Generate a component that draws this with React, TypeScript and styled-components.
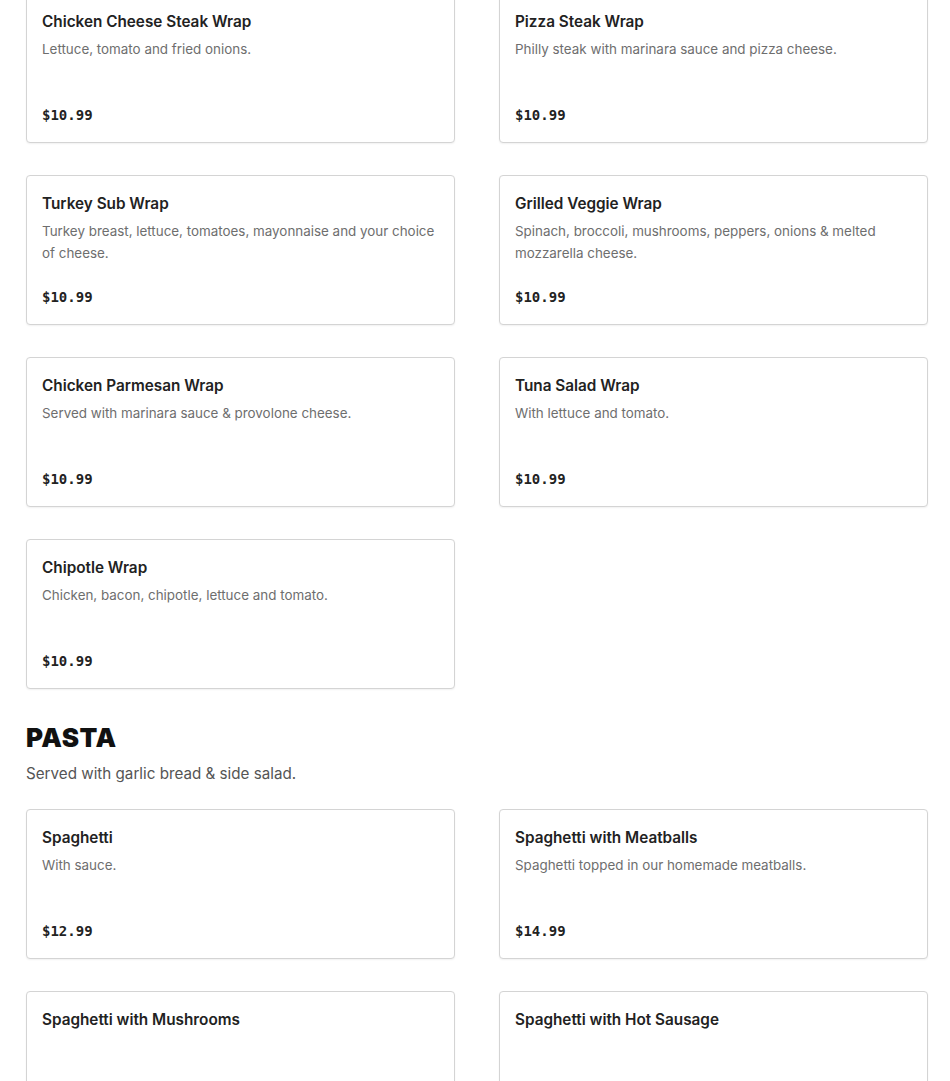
import styled, { createGlobalStyle } from 'styled-components';

interface Item {
  name: string;
  description?: string;
  price?: string;
}

const wraps: Item[] = [
  { name: 'Chicken Cheese Steak Wrap', description: 'Lettuce, tomato and fried onions.', price: '$10.99' },
  { name: 'Pizza Steak Wrap', description: 'Philly steak with marinara sauce and pizza cheese.', price: '$10.99' },
  {
    name: 'Turkey Sub Wrap',
    description: 'Turkey breast, lettuce, tomatoes, mayonnaise and your choice of cheese.',
    price: '$10.99',
  },
  {
    name: 'Grilled Veggie Wrap',
    description: 'Spinach, broccoli, mushrooms, peppers, onions & melted mozzarella cheese.',
    price: '$10.99',
  },
  { name: 'Chicken Parmesan Wrap', description: 'Served with marinara sauce & provolone cheese.', price: '$10.99' },
  { name: 'Tuna Salad Wrap', description: 'With lettuce and tomato.', price: '$10.99' },
  { name: 'Chipotle Wrap', description: 'Chicken, bacon, chipotle, lettuce and tomato.', price: '$10.99' },
];

const pasta: Item[] = [
  { name: 'Spaghetti', description: 'With sauce.', price: '$12.99' },
  { name: 'Spaghetti with Meatballs', description: 'Spaghetti topped in our homemade meatballs.', price: '$14.99' },
  { name: 'Spaghetti with Mushrooms' },
  { name: 'Spaghetti with Hot Sausage' },
];

function MenuCard({ item }: { item: Item }) {
  return (
    <Card>
      <ItemName>{item.name}</ItemName>
      {item.description && <ItemDescription>{item.description}</ItemDescription>}
      {item.price && <Price>{item.price}</Price>}
    </Card>
  );
}

export default function App() {
  return (
    <>
      <GlobalStyle />
      <Page>
        <Grid>
          {wraps.map((item) => (
            <MenuCard key={item.name} item={item} />
          ))}
        </Grid>
        <SectionHeader>
          <SectionTitle>PASTA</SectionTitle>
          <SectionNote>Served with garlic bread &amp; side salad.</SectionNote>
        </SectionHeader>
        <Grid>
          {pasta.map((item) => (
            <MenuCard key={item.name} item={item} />
          ))}
        </Grid>
      </Page>
    </>
  );
}

const GlobalStyle = createGlobalStyle`
  body {
    margin: 0;
    background: #ffffff;
    font-family: Inter, 'Noto Sans', sans-serif;
    overflow: hidden;
  }
`;

const Page = styled.main`
  width: 902px;
  margin: -7px 0 0 26px;
`;

const Grid = styled.div`
  display: grid;
  grid-template-columns: 429px 429px;
  column-gap: 44px;
  row-gap: 32px;
`;

const Card = styled.div`
  display: flex;
  flex-direction: column;
  box-sizing: border-box;
  min-height: 150px;
  padding: 16px 15px 17px;
  border: 1px solid #d4d4d4;
  border-radius: 4px;
  box-shadow: 0 1px 2px rgba(0, 0, 0, 0.06);
  background: #fff;
`;

const ItemName = styled.h3`
  margin: 0;
  font-size: 15.3px;
  line-height: 24px;
  font-weight: 600;
  color: #222;
`;

const ItemDescription = styled.p`
  margin: 4px 0 0;
  font-size: 13.4px;
  line-height: 22px;
  color: #6e6e6e;
`;

const Price = styled.span`
  margin-top: auto;
  padding-top: 22px;
  font-family: 'DejaVu Sans Mono', 'Liberation Mono', monospace;
  font-size: 14px;
  line-height: 20px;
  font-weight: 700;
  color: #222;
`;

const SectionHeader = styled.div`
  padding: 33px 0 24px;
`;

const SectionTitle = styled.h2`
  margin: 0;
  font-family: Inter, 'Liberation Sans', sans-serif;
  font-size: 26px;
  line-height: 32px;
  font-weight: 900;
  letter-spacing: 0.5px;
  color: #111;
`;

const SectionNote = styled.p`
  margin: 9px 0 0;
  font-size: 15.2px;
  line-height: 22px;
  color: #555;
`;
